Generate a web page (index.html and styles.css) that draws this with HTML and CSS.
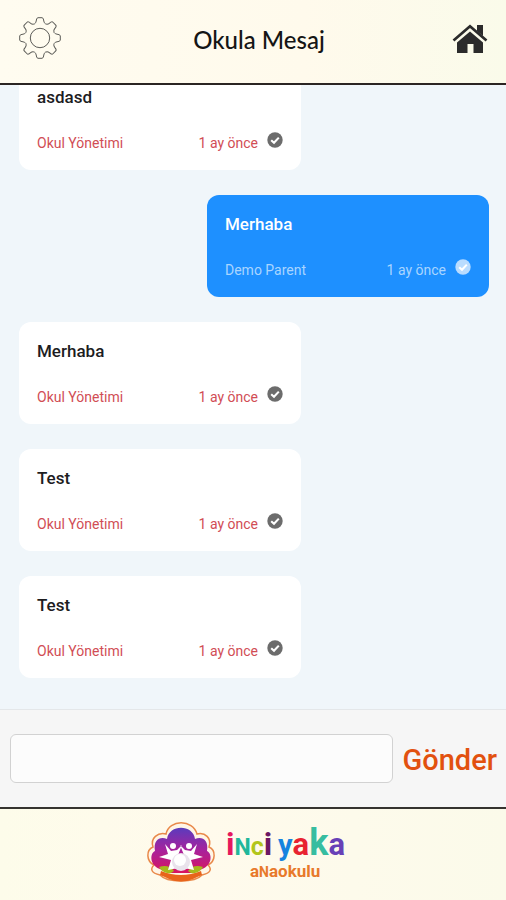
FILE: index.html
```html
<!DOCTYPE html>
<html lang="tr">
<head>
    <meta charset="UTF-8">
    <meta name="viewport" content="width=device-width, initial-scale=1.0">
    <title>Okula Mesaj</title>
    <link rel="stylesheet" href="styles.css">
</head>
<body>
    <svg class="sprite" aria-hidden="true">
        <path id="tooth" d="M-5.5 -14.2Q-4 -15 -3.8 -17Q-3.6 -20.3 -2 -20.3H2Q3.6 -20.3 3.8 -17Q4 -15 5.5 -14.2L6.15 -13.93"/>
        <symbol id="check" viewBox="0 0 16 16">
            <circle cx="8" cy="8" r="7.7" fill="currentColor"/>
            <path class="check-mark" d="M4.2 8.2L7 10.8L11.8 5.6" fill="none" stroke-width="2.1"/>
        </symbol>
    </svg>

    <header class="header">
        <button type="button" class="icon-button" aria-label="Ayarlar">
            <svg class="gear" viewBox="-22 -22 44 44">
                <use href="#tooth"/>
                <use href="#tooth" transform="rotate(45)"/>
                <use href="#tooth" transform="rotate(90)"/>
                <use href="#tooth" transform="rotate(135)"/>
                <use href="#tooth" transform="rotate(180)"/>
                <use href="#tooth" transform="rotate(225)"/>
                <use href="#tooth" transform="rotate(270)"/>
                <use href="#tooth" transform="rotate(315)"/>
                <circle r="9.7"/>
            </svg>
        </button>
        <h1 class="title">Okula Mesaj</h1>
        <a class="home-link" href="#" aria-label="Ana sayfa">
            <svg class="home" viewBox="0 0 36 30">
                <path d="M25 1H31V12L25 7Z"/>
                <path d="M18 7.5L31 18.5V29H21.5V20H15.5V29H5V18.5Z"/>
                <path d="M1.5 16.5L18 2.2L34.5 16.5" fill="none" stroke="#2b2b2b" stroke-width="2.7"/>
            </svg>
        </a>
    </header>

    <main class="messages">
        <article class="message">
            <p class="text">asdasd</p>
            <div class="meta">
                <span>Okul Yönetimi</span>
                <span class="time">1 ay önce</span>
                <svg class="check"><use href="#check"/></svg>
            </div>
        </article>
        <article class="message sent">
            <p class="text">Merhaba</p>
            <div class="meta">
                <span>Demo Parent</span>
                <span class="time">1 ay önce</span>
                <svg class="check"><use href="#check"/></svg>
            </div>
        </article>
        <article class="message">
            <p class="text">Merhaba</p>
            <div class="meta">
                <span>Okul Yönetimi</span>
                <span class="time">1 ay önce</span>
                <svg class="check"><use href="#check"/></svg>
            </div>
        </article>
        <article class="message">
            <p class="text">Test</p>
            <div class="meta">
                <span>Okul Yönetimi</span>
                <span class="time">1 ay önce</span>
                <svg class="check"><use href="#check"/></svg>
            </div>
        </article>
        <article class="message">
            <p class="text">Test</p>
            <div class="meta">
                <span>Okul Yönetimi</span>
                <span class="time">1 ay önce</span>
                <svg class="check"><use href="#check"/></svg>
            </div>
        </article>
    </main>

    <form class="composer">
        <input class="message-input" type="text" name="message" aria-label="Mesaj">
        <button class="send" type="submit">Gönder</button>
    </form>

    <footer class="footer">
        <svg class="logo" viewBox="0 0 200 64" role="img" aria-label="inci yaka anaokulu">
            <defs>
                <linearGradient id="shell" x1="0" y1="0" x2="0" y2="1">
                    <stop offset="0" stop-color="#5a3bbd"/>
                    <stop offset="0.5" stop-color="#a8229c"/>
                    <stop offset="1" stop-color="#d9145f"/>
                </linearGradient>
            </defs>
            <!-- istiridye -->
            <path d="M13 54C4 52 3 48 7 44C-1 40 -1 29 6 26C3 17 11 11 19 13C22 -2 46 -2 50 13C58 11 65 17 62 26C69 29 69 40 61 44C65 48 64 52 55 54C48 62 20 62 13 54Z" fill="#fff5e6" stroke="#e9894a" stroke-width="1.5"/>
            <path d="M14 50Q34 58 54 50L55 54Q50 56 46 58Q34 63 22 58Q18 56 13 54Z" fill="#e8641b"/>
            <path d="M13 48C2 44 3 32 8 30C6 19 13 15 20 18C22 3 46 3 48 18C55 15 62 19 60 30C65 32 66 44 55 48L46 52H22Z" fill="url(#shell)"/>
            <path d="M12 46Q22 43 27 50L24 52Q16 53 12 46ZM41 50Q46 43 56 46Q52 53 44 52Z" fill="#a7b91c"/>
            <g fill="#fff">
                <circle cx="26" cy="25" r="3"/>
                <circle cx="42" cy="25" r="3"/>
                <path d="M18 23L24 30L30 29L35 24L31 34V47L21 49L24 39L12 36L21 33ZM50 23L44 30L38 29L33 24L37 34V47L47 49L44 39L56 36L47 33Z"/>
                <circle cx="34" cy="41" r="9" fill="#e9e3ec"/>
                <circle cx="33" cy="39" r="6"/>
            </g>
            <text class="logo-name" x="79" y="34"><tspan font-size="32" fill="#e5185d">i</tspan><tspan font-size="23" fill="#21b79b">N</tspan><tspan font-size="25" fill="#b2c51b">c</tspan><tspan font-size="32" fill="#6c1763">i</tspan></text>
            <text class="logo-name" x="131" y="34"><tspan font-size="29" fill="#1684df">y</tspan><tspan font-size="31" fill="#e82331">a</tspan><tspan font-size="36" fill="#37bda0">k</tspan><tspan font-size="31" fill="#6840b7">a</tspan></text>
            <text class="logo-sub" x="103" y="56">a<tspan font-size="14">N</tspan>aokulu</text>
        </svg>
    </footer>
</body>
</html>
```
FILE: styles.css
```css
* {
    box-sizing: border-box;
}
body {
    font-family: Roboto, "Liberation Sans", sans-serif;
    margin: 0;
    height: 100vh;
    display: flex;
    flex-direction: column;
    background-color: #f0f6fa;
    color: #1d1d1f;
}
button {
    padding: 0;
    border: none;
    background: none;
    cursor: pointer;
}
.sprite {
    position: absolute;
    width: 0;
    height: 0;
}
.header {
    flex: none;
    display: grid;
    grid-template-columns: 44px 1fr 44px;
    align-items: center;
    padding: 16px 18px 23px;
    border-bottom: 2px solid #2b2523;
    background: linear-gradient(90deg, #fffcf0, #fffaec 60%, #fafbea);
}
.icon-button {
    height: 44px;
}
.gear {
    display: block;
    width: 44px;
    height: 44px;
    fill: none;
    stroke: #5c5c58;
    stroke-width: 1;
}
.title {
    margin: 0;
    padding: 4px 0 0 12px;
    font-family: Lato, "Open Sans", sans-serif;
    font-size: 24px;
    font-weight: 500;
    line-height: 36px;
    text-align: center;
    color: #151515;
}
.home-link {
    justify-self: end;
    padding-top: 2px;
}
.home {
    display: block;
    width: 36px;
    height: 30px;
    fill: #2b2b2b;
}
.messages {
    flex: 1;
    min-height: 0;
    display: flex;
    flex-direction: column;
    justify-content: flex-end;
    gap: 25px;
    padding: 0 17px 31px 19px;
    overflow: hidden;
}
.message {
    flex: none;
    width: 60%;
    padding: 18px 18px 16px;
    border-radius: 12px;
    background-color: #fff;
}
.text {
    margin: 0 0 24px;
    font-size: 17px;
    font-weight: 500;
    line-height: 22px;
}
.meta {
    display: flex;
    align-items: center;
    font-size: 14px;
    line-height: 20px;
    color: #d14d55;
}
.time {
    margin-left: auto;
}
.check {
    width: 16px;
    height: 16px;
    margin: 0 0 6px 9px;
    color: #6c6c6c;
}
.check-mark {
    stroke: #fff;
}
.sent {
    align-self: flex-end;
    background-color: #1e90ff;
    color: #fff;
}
.sent .meta {
    color: #a9d5ff;
}
.sent .check {
    color: #b9dcff;
}
.sent .check-mark {
    stroke: #1e90ff;
}
.composer {
    flex: none;
    display: flex;
    align-items: center;
    gap: 10px;
    padding: 24px 9px 24px 10px;
    border-top: 1px solid #e4e7e9;
    background-color: #f6f6f6;
}
.message-input {
    flex: 1;
    min-width: 0;
    height: 49px;
    padding: 0 12px;
    border: 1px solid #d2d2d2;
    border-radius: 6px;
    background-color: #fcfcfc;
    font: inherit;
    font-size: 17px;
}
.send {
    padding-top: 2px;
    font-family: inherit;
    font-size: 29px;
    font-weight: 500;
    line-height: 40px;
    color: #e2510f;
}
.footer {
    flex: none;
    display: flex;
    justify-content: center;
    padding: 12px 12px 15px 0;
    border-top: 2px solid #35332f;
    background: linear-gradient(90deg, #fdfcea, #fffaec 40%, #fbfaea);
}
.logo {
    width: 200px;
    height: 64px;
    overflow: visible;
}
.logo-name,
.logo-sub {
    font-family: Roboto, "Liberation Sans", sans-serif;
    font-weight: 700;
}
.logo-sub {
    font-size: 17px;
    fill: #e8792a;
}
```
